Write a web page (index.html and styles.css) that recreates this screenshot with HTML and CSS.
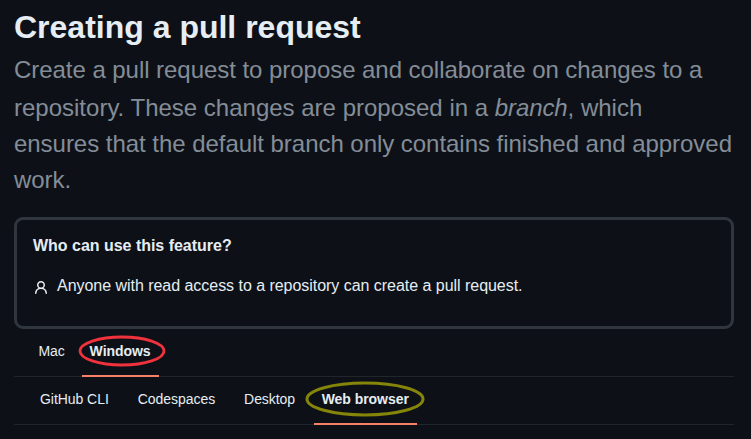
FILE: index.html
```html
<!DOCTYPE html>
<html lang="en">
<head>
<meta charset="utf-8">
<title>Creating a pull request</title>
<link rel="stylesheet" href="styles.css">
</head>
<body>
<main class="page">
  <h1 class="title">Creating a pull request</h1>
  <p class="intro"><span class="line first">Create a pull request to propose and collaborate on changes to a</span> <span class="line second">repository. These changes are proposed in a <em>branch</em>, which</span> <span class="line">ensures that the default branch only contains finished and approved</span> <span class="line">work.</span></p>
  <section class="callout">
    <h2 class="callout-title">Who can use this feature?</h2>
    <div class="callout-row">
      <svg class="person" viewBox="0 0 16 16" width="16" height="16"><path fill="currentColor" d="M10.561 8.073a6.005 6.005 0 0 1 3.432 5.142.75.75 0 1 1-1.498.07 4.5 4.5 0 0 0-8.99 0 .75.75 0 0 1-1.498-.07 6.004 6.004 0 0 1 3.431-5.142 3.999 3.999 0 1 1 5.123 0ZM10.5 5a2.5 2.5 0 1 0-5 0 2.5 2.5 0 0 0 5 0Z"/></svg>
      <p class="callout-text">Anyone with read access to a repository can create a pull request.</p>
    </div>
  </section>
  <nav class="tabs platform">
    <a class="tab mac">Mac</a>
    <a class="tab windows active">Windows<svg class="ring" width="90" height="34" viewBox="0 0 90 34"><ellipse cx="45" cy="17" rx="42" ry="14" fill="none" stroke="#f0323c" stroke-width="2.8"/></svg></a>
  </nav>
  <nav class="tabs tools">
    <a class="tab cli">GitHub CLI</a>
    <a class="tab codespaces">Codespaces</a>
    <a class="tab desktop">Desktop</a>
    <a class="tab web active">Web browser<svg class="ring" width="122" height="38" viewBox="0 0 122 38"><ellipse cx="61" cy="19" rx="58" ry="16" fill="none" stroke="#85850a" stroke-width="3"/></svg></a>
  </nav>
</main>
</body>
</html>
```

FILE: styles.css
```css
* { box-sizing: border-box; }
body { margin: 0; background: #0d1117; color: #e6edf3; font-family: "Liberation Sans", Arial, sans-serif; overflow: hidden; }
.page { width: 751px; height: 439px; padding: 3px 17px 0 14px; }
.title { margin: 0; font-size: 32px; line-height: 48px; font-weight: 700; white-space: nowrap; }
.intro { margin: 1px 0 0; font-size: 24px; line-height: 36px; color: #848d97; white-space: nowrap; letter-spacing: -0.038px; }
.line { display: block; }
.first { letter-spacing: -0.045px; }
.second { margin-top: 2px; letter-spacing: 0; }
.second em { letter-spacing: -0.1px; }
.callout { height: 112px; margin-top: 19px; padding: 16px; border: 3px solid #30363d; border-radius: 9px; }
.callout-title { margin: 0; font-size: 16px; line-height: 20px; letter-spacing: -0.02px; }
.callout-row { display: flex; gap: 8px; margin-top: 19px; }
.person { margin-top: 5px; }
.callout-text { margin: 0; font-size: 16px; line-height: 22px; letter-spacing: -0.035px; }
.tabs { display: flex; height: 48px; border-bottom: 1px solid #21262d; font-size: 14px; line-height: 44px; letter-spacing: -0.05px; }
.tab { position: relative; height: 48px; padding: 0 8px; white-space: nowrap; }
.active { font-weight: 700; border-bottom: 2px solid #f78166; }
.platform { padding-left: 16.5px; }
.tools { padding-left: 18px; }
.windows { width: 77px; margin-left: 9.3px; padding-left: 7.5px; }
.codespaces, .desktop { margin-left: 13px; }
.web { width: 103px; margin-left: 10.5px; padding-left: 8.1px; }
.ring { position: absolute; left: -5px; top: 5px; }
.web .ring { left: -10px; top: 3px; }
```
